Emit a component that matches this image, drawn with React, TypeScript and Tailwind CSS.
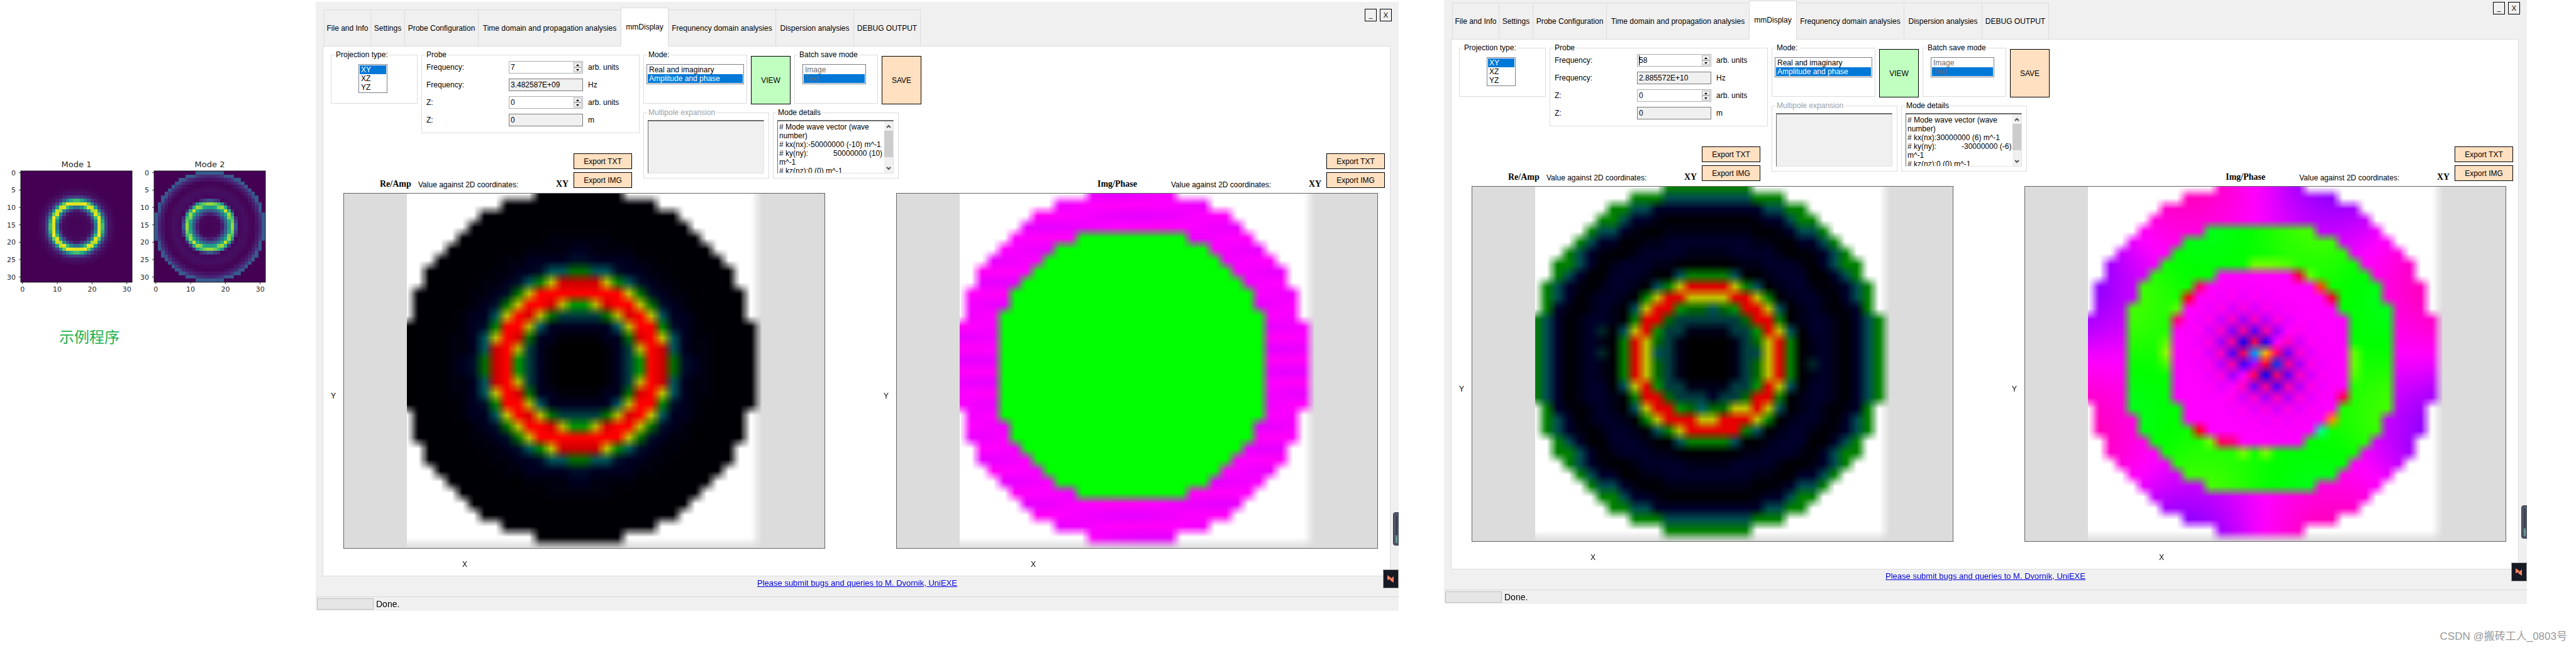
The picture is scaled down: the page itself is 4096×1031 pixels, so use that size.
import { useEffect, useId, useRef } from "react";
import clsx from "clsx";

const N = 32;
const MID = 15.5;

type ColorFn = (col: number, row: number) => string;
type Stop = [number, string];
type Overrides = Record<string, string>;

const radius = (col: number, row: number) => Math.hypot(col - MID, row - MID);

// last stop whose radius has been passed
const pickStop = (stops: Stop[], r: number) => {
  let color = stops[0][1];
  for (const [from, c] of stops) if (r >= from) color = c;
  return color;
};

const lerpTable = (table: [number, number][], r: number) => {
  for (let i = 1; i < table.length; i++) {
    const [r0, v0] = table[i - 1];
    const [r1, v1] = table[i];
    if (r <= r1) return v0 + ((v1 - v0) * (r - r0)) / (r1 - r0);
  }
  return table[table.length - 1][1];
};

/* ---------- viridis previews ---------- */

const VIRIDIS = [
  [68, 1, 84],
  [72, 36, 117],
  [65, 68, 135],
  [53, 95, 141],
  [42, 120, 142],
  [33, 145, 140],
  [34, 168, 132],
  [68, 191, 112],
  [122, 209, 81],
  [189, 223, 38],
  [253, 231, 37],
];

const viridis = (v: number) => {
  const x = Math.min(0.9999, Math.max(0, v)) * 10;
  const i = Math.floor(x);
  const c = VIRIDIS[i].map((a, k) => Math.round(a + (VIRIDIS[i + 1][k] - a) * (x - i)));
  return `rgb(${c.join(",")})`;
};

const MODE_1: [number, number][] = [
  [0, 0.005], [3.5, 0.02], [4.5, 0.07], [5.5, 0.36], [6, 0.65], [6.5, 0.95], [6.96, 1],
  [7.1, 0.92], [7.5, 0.7], [8, 0.42], [8.5, 0.19], [9.5, 0.05], [11, 0.01], [12, 0], [24, 0],
];

const MODE_2: [number, number][] = [
  [0, 0.01], [3, 0.02], [3.5, 0.07], [4.5, 0.25], [5.15, 0.42], [5.5, 0.54], [5.7, 0.6], [6.04, 0.8],
  [6.4, 0.93], [6.55, 0.82], [6.96, 0.68], [7.4, 0.5], [7.55, 0.2], [7.9, 0.12], [8.2, 0.01],
  [9, 0.03], [10.5, 0.04], [12, 0.01], [13, 0.01], [13.6, 0.05], [14.5, 0.1], [15, 0.17], [15.2, 0.28], [16, 0.28],
];

const mode1 = (col: number, row: number) => lerpTable(MODE_1, radius(col, row));
const mode2 = (col: number, row: number) => {
  const r = radius(col, row);
  return r > 16 ? 0 : lerpTable(MODE_2, r);
};

function ModeChart({ title, value }: { title: string; value: (col: number, row: number) => number }) {
  const size = 177;
  const left = 33;
  const top = 22;
  const cell = size / N;
  const cells = [];
  for (let row = 0; row < N; row++) {
    for (let col = 0; col < N; col++) {
      const v = value(col, row);
      if (v > 0.005) {
        cells.push(
          <rect key={`${col}-${row}`} x={left + col * cell} y={top + row * cell} width={cell} height={cell} fill={viridis(v)} />
        );
      }
    }
  }
  return (
    <svg width="212" height="220" viewBox="0 0 212 220" className="font-['DejaVu_Sans',sans-serif] text-[11px]" fill="#262626">
      <text x={left + size / 2} y="16" textAnchor="middle" fontSize="13">
        {title}
      </text>
      <rect x={left} y={top} width={size} height={size} fill="#440154" />
      <g shapeRendering="crispEdges">{cells}</g>
      <rect x={left} y={top} width={size} height={size} fill="none" stroke="#1a1a1a" />
      {[0, 5, 10, 15, 20, 25, 30].map((t) => {
        const y = top + (t + 0.5) * cell;
        return (
          <g key={t}>
            <path d={`M${left - 3} ${y}H${left}`} stroke="#262626" />
            <text x={left - 8} y={y + 4} textAnchor="end">
              {t}
            </text>
          </g>
        );
      })}
      {[0, 10, 20, 30].map((t) => {
        const x = left + (t + 0.5) * cell;
        return (
          <g key={t}>
            <path d={`M${x} ${top + size}v3`} stroke="#262626" />
            <text x={x} y={top + size + 15} textAnchor="middle">
              {t}
            </text>
          </g>
        );
      })}
    </svg>
  );
}

/* ---------- mode maps ---------- */

const RED = "#e60000";
const YELLOW = "#c3c300";
const GREEN = "#008200";
const TEAL = "#00505a";

const AMP_7: Stop[] = [
  [0, "#000000"], [2.5, "#000008"], [3.2, "#000020"], [4.4, "#003c3e"], [4.8, "#00565e"],
  [5.1, "#006e00"], [5.4, "#009600"], [5.6, "#b9b900"], [6, "#d70000"], [6.4, "#ff0000"],
  [7.4, "#cd0000"], [7.7, "#c3c300"], [8.1, "#008200"], [8.5, "#006e00"], [8.6, "#005558"],
  [9.1, "#000e28"], [9.6, "#000020"], [10.6, "#00000e"], [11.8, "#000004"],
];

const AMP_58: Stop[] = [
  [0, "#000000"], [2.5, "#000018"], [3.4, "#003c40"], [4.4, "#006900"], [5.1, "#009600"],
  [5.5, YELLOW], [5.65, RED], [6.9, YELLOW], [7.3, GREEN], [7.8, TEAL], [8.1, "#000004"],
  [9, "#000018"], [9.7, "#00002a"], [11.4, "#000016"], [12.1, "#000004"], [13, "#000012"],
  [13.5, "#00002a"], [14.3, "#004c50"], [15.1, "#008000"],
];

const AMP_58_CELLS: Overrides = {
  "14,10": YELLOW, "17,10": YELLOW, "10,14": YELLOW, "21,14": YELLOW, "10,17": YELLOW, "21,17": YELLOW,
  "19,20": YELLOW, "18,20": YELLOW, "18,22": RED, "16,11": "#00505a", "15,20": "#00606a",
  "11,15": "#00505a", "20,15": "#00464c", "16,19": "#000028",
  "6,13": "#002828", "6,15": "#002828", "25,16": "#002828",
};

const PHASE_58_CELLS: Overrides = {
  "15,15": "#0095ff", "16,15": "#ffb400", "14,14": "#0800ff", "16,17": "#0000ff", "17,16": "#0038ff",
  "16,16": "#ff0030", "15,14": "#ff0050", "14,16": "#3c00ff", "15,16": "#b400ff", "13,15": "#4b00ff",
  "15,17": "#ff005a", "17,18": "#4600ff",
  "21,9": "#ff4600", "22,10": "#f50028", "19,8": "#f5003c", "10,9": "#ff006e", "9,10": "#ff0014",
  "8,12": "#ff0082", "10,22": "#ff0014", "12,23": "#ff0064", "22,21": "#ff8c00", "21,22": "#00ff8c",
  "23,19": "#ff0050", "8,11": "#5aff00", "11,23": "#6eff00", "14,24": "#78ff00", "16,24": "#78ff00",
  "15,7": "#6eff00", "16,7": "#6eff00", "17,7": "#64ff00", "18,7": "#50ff00", "20,8": "#64ff00",
  "7,15": "#8cff00", "7,14": "#5aff00", "7,16": "#46ff00", "24,15": "#64ff00", "24,16": "#64ff00",
  "24,17": "#50ff00", "13,23": "#ff0082",
};

const amplitude7: ColorFn = (col, row) => {
  const r = radius(col, row);
  return r > 16 ? "#ffffff" : pickStop(AMP_7, r);
};

const amplitude58: ColorFn = (col, row) => {
  const r = radius(col, row);
  if (r > 16) return "#ffffff";
  return AMP_58_CELLS[`${col},${row}`] ?? pickStop(AMP_58, r);
};

const phase7: ColorFn = (col, row) => {
  const r = radius(col, row);
  if (r > 16) return "#ffffff";
  if (r < 12.4) return "#00ff00";
  const jitter = Math.sin(col * 12.9 + row * 78.2) * 4;
  return `hsl(${298 + jitter} 100% 50%)`;
};

const phase58: ColorFn = (col, row) => {
  const r = radius(col, row);
  if (r > 16) return "#ffffff";
  const cell = PHASE_58_CELLS[`${col},${row}`];
  if (cell) return cell;
  const dx = col - MID;
  const dy = row - MID;
  const wave = Math.sin(4 * Math.atan2(-dy, dx));
  if (r > 12.4) return `hsl(${299 + (wave > 0 ? 15 : 23) * wave * (r / 15.5) ** 3} 100% 50%)`;
  if (r > 8.6 || Math.max(Math.abs(dx), Math.abs(dy)) > 8) {
    return `hsl(${117 + (wave > 0 ? 8 : 12) * wave * (r / 12) ** 3} 100% 50%)`;
  }
  // checkered core, stretched along the falling diagonal
  if (col + row === 31) return "#ff00ff";
  const even = (col + row) % 2 === 0;
  const blue = col + row < 31 ? even : !even;
  const fade = Math.exp(-((dx - dy) ** 2 / 14 + (dx + dy) ** 2 / 28));
  return `hsl(${blue ? 300 - 75 * fade : 300 + 48 * fade} 100% 50%)`;
};

function ModeMap({ label, color }: { label: string; color: ColorFn }) {
  const ref = useRef<HTMLCanvasElement>(null);

  useEffect(() => {
    const canvas = ref.current;
    const ctx = canvas?.getContext("2d");
    if (!canvas || !ctx) return;
    // one extra row and column, so the last samples fade into the backdrop
    const src = document.createElement("canvas");
    src.width = src.height = N + 1;
    const sctx = src.getContext("2d");
    if (!sctx) return;
    sctx.fillStyle = "#dcdcdc";
    sctx.fillRect(0, 0, N + 1, N + 1);
    for (let row = 0; row < N; row++) {
      for (let col = 0; col < N; col++) {
        sctx.fillStyle = color(col, row);
        sctx.fillRect(col, row, 1, 1);
      }
    }
    ctx.imageSmoothingEnabled = true;
    ctx.imageSmoothingQuality = "low";
    ctx.drawImage(src, 0.5, 0.5, N, N, 0, 0, canvas.width, canvas.height);
  }, [color]);

  return (
    <div className="flex-1 h-[566px] border border-[#646464] bg-[#dcdcdc]">
      <canvas ref={ref} width={564} height={564} role="img" aria-label={label} className="mx-auto block aspect-square h-full" />
    </div>
  );
}

/* ---------- form parts ---------- */

type GroupProps = { title: string; className?: string; disabled?: boolean; children?: React.ReactNode };

function Group({ title, className, disabled, children }: GroupProps) {
  return (
    <fieldset disabled={disabled} className={clsx("min-w-0 border border-[#dcdcdc]", className)}>
      <legend className={clsx("ml-[5px] px-[2px]", disabled && "text-[#a0a0a0]")}>{title}</legend>
      {children}
    </fieldset>
  );
}

type ListProps = { label: string; options: string[]; selected: string; className?: string; disabled?: boolean };

function ListBox({ label, options, selected, className, disabled }: ListProps) {
  return (
    <select
      aria-label={label}
      size={options.length}
      defaultValue={selected}
      disabled={disabled}
      className={clsx(
        "mt-2 block appearance-none overflow-hidden rounded-none border border-[#7a7f8a] bg-white p-px opacity-100 outline-none",
        className
      )}
    >
      {options.map((o) => (
        <option
          key={o}
          className={clsx(
            "h-[14px] min-h-0 px-[2px] py-0 leading-[14px]",
            o === selected && "bg-[linear-gradient(#0078d7,#0078d7)]",
            disabled ? "text-[#6d6d6d]" : o === selected ? "text-white" : "text-black"
          )}
        >
          {o}
        </option>
      ))}
    </select>
  );
}

type FieldProps = { label: string; value: string; unit: string; spin?: boolean; caret?: boolean };

function Field({ label, value, unit, spin, caret }: FieldProps) {
  const id = useId();
  return (
    <div className="flex h-5 items-center">
      <label htmlFor={id} className="w-[131px]">
        {label}
      </label>
      <div
        className={clsx(
          "relative flex h-5 w-[118px] border",
          spin ? "border-[#abadb3] bg-white" : "border-[#7a7a7a] bg-[#f0f0f0]"
        )}
      >
        <input id={id} defaultValue={value} readOnly={!spin} className="min-w-0 flex-1 bg-transparent pl-[2px] leading-[14px] outline-none" />
        {caret && <span className="absolute left-[2px] top-px h-4 w-px bg-black" />}
        {spin && (
          <div className="flex w-[14px] flex-col py-px pr-px">
            <button type="button" aria-label="Increase" className="flex flex-1 items-center justify-center border border-[#b4b4b4] bg-[#f0f0f0]">
              <svg width="5" height="3" viewBox="0 0 5 3">
                <path d="M2.5 0L5 3H0z" />
              </svg>
            </button>
            <button type="button" aria-label="Decrease" className="flex flex-1 items-center justify-center border border-[#b4b4b4] bg-[#f0f0f0]">
              <svg width="5" height="3" viewBox="0 0 5 3">
                <path d="M0 0h5L2.5 3z" />
              </svg>
            </button>
          </div>
        )}
      </div>
      <span className="pl-2">{unit}</span>
    </div>
  );
}

function ActionButton({ text, className }: { text: string; className: string }) {
  return (
    <button type="button" className={clsx("border border-black", className)}>
      {text}
    </button>
  );
}

function MapHeader({ title, titleClass, className }: { title: string; titleClass: string; className?: string }) {
  return (
    <div className={clsx("flex items-end justify-end", className)}>
      <strong className={clsx("font-['Liberation_Serif',serif] text-[14px] leading-4", titleClass)}>{title}</strong>
      <span className="w-[219px]">Value against 2D coordinates:</span>
      <strong className="w-7 font-['Liberation_Serif',serif] text-[14px] leading-4">XY</strong>
      <div className="mb-[2px] flex flex-col gap-[5px]">
        <ActionButton text="Export TXT" className="h-[25px] w-[93px] bg-[#ffe0c0]" />
        <ActionButton text="Export IMG" className="h-[25px] w-[93px] bg-[#ffe0c0]" />
      </div>
    </div>
  );
}

function Details({ text }: { text: string }) {
  return (
    <div className="ml-[6px] mt-[5px] flex h-[85px] w-[185px] border border-[#e3e3e3] border-l-[#696969] border-t-2 border-t-[#696969] bg-white">
      <textarea
        aria-label="Mode details"
        readOnly
        defaultValue={text}
        className="min-w-0 flex-1 resize-none overflow-hidden whitespace-pre pl-[2px] pt-[2px] leading-[14px] outline-none [tab-size:43px]"
      />
      <div className="flex w-[14px] flex-col items-center bg-[#f0f0f0]">
        <svg width="14" height="15" viewBox="0 0 14 15" fill="none" stroke="#555" strokeWidth="2">
          <path d="M4 10l3-3 3 3" />
        </svg>
        <div className="h-[42px] w-full bg-[#cdcdcd]" />
        <svg width="14" height="15" viewBox="0 0 14 15" fill="none" stroke="#555" strokeWidth="2" className="mt-auto">
          <path d="M4 6l3 3 3-3" />
        </svg>
      </div>
    </div>
  );
}

/* ---------- application window ---------- */

const TABS = [
  { name: "File and Info", width: "w-[73px]" },
  { name: "Settings", width: "w-[53px]" },
  { name: "Probe Configuration", width: "w-[116px]" },
  { name: "Time domain and propagation analysies", width: "w-[226px]" },
  { name: "mmDisplay", width: "w-[74px]", active: true },
  { name: "Frequnency domain analysies", width: "w-[170px]" },
  { name: "Dispersion analysies", width: "w-[123px]" },
  { name: "DEBUG OUTPUT", width: "w-[105px]" },
];

type WindowProps = {
  probe: string;
  frequency: string;
  details: string;
  amplitude: ColorFn;
  phase: ColorFn;
  editing?: boolean;
  className?: string;
};

function AppWindow({ probe, frequency, details, amplitude, phase, editing, className }: WindowProps) {
  return (
    <section className={clsx("relative min-w-0 flex-1 bg-[#f0f0f0] text-[12px] leading-[14px] text-black", className)}>
      <header className="flex h-[70px] items-end justify-between pl-[14px] pr-[11px]">
        <nav className="relative -mb-px flex items-end">
          {TABS.map((t) => (
            <button
              type="button"
              key={t.name}
              className={clsx(
                "-ml-px box-content whitespace-nowrap border border-[#dcdcdc]",
                t.width,
                t.active ? "z-10 h-[59px] border-b-white bg-white pb-px" : "h-[57px]"
              )}
            >
              {t.name}
            </button>
          ))}
        </nav>
        <div className="flex gap-[5px] self-start pt-[11px]">
          <button type="button" aria-label="Minimise" className="h-5 w-[19px] border border-black text-[11px] leading-4">
            _
          </button>
          <button type="button" aria-label="Close" className="h-5 w-[19px] border border-black text-[11px] leading-4">
            X
          </button>
        </div>
      </header>

      <div className="ml-[11px] mr-[13px] border border-[#dcdcdc] bg-white pb-[11px]">
        <div className="flex h-[227px] pt-[6px]">
          <div className="flex w-[503px] flex-col justify-between">
            <div className="flex items-start gap-[6px] pl-3">
              <Group title="Projection type:" className="h-[85px] w-[138px]">
                <ListBox label="Projection type" options={["XY", "XZ", "YZ"]} selected="XY" className="ml-[43px] h-[46px] w-[46px]" />
              </Group>
              <Group title="Probe" className="h-[132px] w-[347px]">
                <div className="flex flex-col gap-2 pl-[7px] pt-[3px]">
                  <Field label="Frequency:" value={probe} unit="arb. units" spin caret={editing} />
                  <Field label="Frequency:" value={frequency} unit="Hz" />
                  <Field label="Z:" value="0" unit="arb. units" spin />
                  <Field label="Z:" value="0" unit="m" />
                </div>
              </Group>
            </div>
            <MapHeader title="Re/Amp" titleClass="w-[61px]" className="pr-3" />
          </div>

          <div className="ml-[6px] flex flex-col gap-[6px]">
            <div className="flex items-start gap-[6px]">
              <Group title="Mode:" className="h-[85px] w-[165px]">
                <ListBox
                  label="Mode"
                  options={["Real and imaginary", "Amplitude and phase"]}
                  selected="Amplitude and phase"
                  className="ml-1 h-8 w-[155px]"
                />
              </Group>
              <ActionButton text="VIEW" className="mt-[9px] h-[77px] w-[63px] bg-[#c0ffc0]" />
              <Group title="Batch save mode" className="h-[85px] w-[133px]">
                <ListBox label="Batch save mode" options={["Image", "Text"]} selected="Text" disabled className="ml-3 h-8 w-[101px]" />
              </Group>
              <ActionButton text="SAVE" className="mt-[9px] h-[77px] w-[63px] bg-[#ffe0c0]" />
            </div>
            <div className="flex gap-[6px]">
              <Group title="Multipole expansion" disabled className="h-[112px] w-[200px]">
                <div className="ml-[6px] mt-[5px] h-[85px] w-[185px] border border-[#e3e3e3] border-l-[#696969] border-t-2 border-t-[#696969] bg-[#f0f0f0]" />
              </Group>
              <Group title="Mode details" className="h-[112px] w-[200px]">
                <Details text={details} />
              </Group>
            </div>
          </div>

          <MapHeader title="Img/Phase" titleClass="w-[117px]" className="ml-auto pr-[8px]" />
        </div>

        <div className="mt-[6px] flex gap-[81px] pr-[19px]">
          <div className="flex-1">
            <div className="flex">
              <div className="flex w-8 items-center justify-center pt-20">Y</div>
              <ModeMap label="Amplitude" color={amplitude} />
            </div>
            <div className="mt-[18px] pl-[221px]">X</div>
          </div>
          <div className="flex-1">
            <div className="flex">
              <div className="flex w-8 items-center justify-center pt-20">Y</div>
              <ModeMap label="Phase" color={phase} />
            </div>
            <div className="mt-[18px] pl-[246px]">X</div>
          </div>
        </div>
      </div>

      <div className="flex h-8 justify-center pt-[3px] text-[13px] leading-4">
        <a href="#bugs" className="text-[#0000e0] underline">
          Please submit bugs and queries to M. Dvornik, UniEXE
        </a>
      </div>
      <footer className="flex h-[23px] gap-1 border-t border-[#d7d7d7] pl-[2px] pt-[2px] text-[14px] leading-[18px]">
        <div className="h-[18px] w-[90px] border border-[#bcbcbc] bg-[#e6e6e6]" />
        <span>Done.</span>
      </footer>

      {/* widgets docked to the screen edge */}
      <svg width="9" height="53" viewBox="0 0 9 53" className="absolute right-0 top-[812px]">
        <path d="M9 .5H3.500Q.5 .5 .5 4v45q0 3.500 3 3.500H9" fill="#50566a" stroke="#343845" />
        <path d="M5.500 6v31" stroke="#2b2e38" strokeWidth="3" strokeDasharray="1 1" />
        <path d="M5.500 37v11" stroke="#7fe0b0" strokeWidth="3" strokeDasharray="1 1" />
      </svg>
      <svg width="25" height="30" viewBox="0 0 25 30" className="absolute right-0 top-[903px]">
        <rect x=".5" y=".5" width="24" height="29" fill="#171923" stroke="#9a9a9a" />
        <path d="M7 9l6 4.500-1 1.500 5-4v10l-6-4 1.500-2L7 17z" fill="#ff8266" />
      </svg>
    </section>
  );
}

const DETAILS_7 = `# Mode wave vector (wave
number)
# kx(nx):-50000000 (-10) m^-1
# ky(ny):\t50000000 (10)
m^-1
# kz(nz):0 (0) m^-1`;

const DETAILS_58 = `# Mode wave vector (wave
number)
# kx(nx):30000000 (6) m^-1
# ky(ny):\t-30000000 (-6)
m^-1
# kz(nz):0 (0) m^-1`;

export default function App() {
  return (
    <main className="flex min-h-screen flex-col overflow-hidden bg-white font-['Liberation_Sans',Arial,sans-serif]">
      <div className="flex items-start pr-[78px]">
        <aside className="w-[502px] shrink-0 pt-[250px]">
          <div className="flex">
            <ModeChart title="Mode 1" value={mode1} />
            <ModeChart title="Mode 2" value={mode2} />
          </div>
          <p className="mt-[50px] pl-[94px] font-['Noto_Sans_CJK_SC',sans-serif] text-[24px] leading-[30px] text-[#22b14c]">示例程序</p>
        </aside>
        <AppWindow
          probe="7"
          frequency="3.482587E+09"
          details={DETAILS_7}
          amplitude={amplitude7}
          phase={phase7}
          className="mt-[3px]"
        />
        <AppWindow
          probe="58"
          frequency="2.885572E+10"
          details={DETAILS_58}
          amplitude={amplitude58}
          phase={phase58}
          editing
          className="-mt-2 ml-[72px]"
        />
      </div>
      <p className="mt-[29px] pr-[14px] text-right font-['Liberation_Sans','Noto_Sans_CJK_SC',sans-serif] text-[17px] leading-6 text-[#999]">
        CSDN @搬砖工人_0803号
      </p>
    </main>
  );
}
